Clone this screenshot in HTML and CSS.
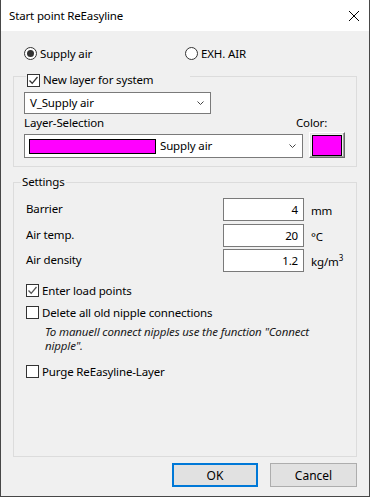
FILE: index.html
```html
<!DOCTYPE html>
<html lang="en">
<head>
    <meta charset="UTF-8">
    <title>Start point ReEasyline</title>
    <link rel="stylesheet" href="styles.css">
</head>
<body>
    <div class="dialog">
        <div class="titlebar">
            <span class="title">Start point ReEasyline</span>
            <svg class="close" width="10" height="10" viewBox="0 0 10 10">
                <path d="M0 0 L10 10 M10 0 L0 10" stroke="#000" stroke-width="1"/>
            </svg>
        </div>

        <div class="body">
            <div class="radio-row">
                <label class="radio first"><span class="radio-dot checked"></span>Supply air</label>
                <label class="radio"><span class="radio-dot"></span>EXH. AIR</label>
            </div>

            <div class="group layer-group">
                <div class="legend legend-check">
                    <span class="check checked"><svg width="11" height="11" viewBox="0 0 11 11"><path d="M1.5 5.5 L4.2 8.3 L9.5 2" fill="none" stroke="#333" stroke-width="1.3"/></svg></span>
                    New layer for system
                </div>
                <div class="combo combo-layer">
                    <span class="combo-text">V_Supply air</span>
                    <svg class="chevron" width="7" height="4" viewBox="0 0 7 4"><path d="M0.5 0.5 L3.5 3.5 L6.5 0.5" fill="none" stroke="#444"/></svg>
                </div>
                <div class="label-row">
                    <span>Layer-Selection</span>
                    <span class="color-label">Color:</span>
                </div>
                <div class="select-row">
                    <div class="combo combo-select">
                        <span class="swatch"></span>
                        <span class="combo-text">Supply air</span>
                        <svg class="chevron" width="7" height="4" viewBox="0 0 7 4"><path d="M0.5 0.5 L3.5 3.5 L6.5 0.5" fill="none" stroke="#444"/></svg>
                    </div>
                    <div class="color-button"><span class="color-fill"></span></div>
                </div>
            </div>

            <div class="group settings-group">
                <div class="legend legend-text">Settings</div>
                <div class="field-row">
                    <span class="field-label">Barrier</span>
                    <span class="field-input">4</span>
                    <span class="field-unit">mm</span>
                </div>
                <div class="field-row row-2">
                    <span class="field-label">Air temp.</span>
                    <span class="field-input">20</span>
                    <span class="field-unit">°C</span>
                </div>
                <div class="field-row row-3">
                    <span class="field-label">Air density</span>
                    <span class="field-input">1.2</span>
                    <span class="field-unit">kg/m<sup>3</sup></span>
                </div>

                <div class="check-row load-row">
                    <span class="check"><svg width="11" height="11" viewBox="0 0 11 11"><path d="M1.5 5.5 L4.2 8.3 L9.5 2" fill="none" stroke="#555" stroke-width="1.3"/></svg></span>
                    Enter load points
                </div>
                <div class="check-row delete-row">
                    <span class="check"></span>
                    Delete all old nipple connections
                </div>
                <p class="note">To manuell connect nipples use the function "Connect<br>nipple".</p>
                <div class="check-row purge-row">
                    <span class="check"></span>
                    Purge ReEasyline-Layer
                </div>
            </div>

            <div class="button-row">
                <button class="btn btn-ok">OK</button>
                <button class="btn">Cancel</button>
            </div>
        </div>
    </div>
</body>
</html>
```

FILE: styles.css
```css
* {
    box-sizing: border-box;
}
body {
    margin: 0;
    font-family: "Noto Sans", "Open Sans", sans-serif;
    font-size: 11.5px;
    letter-spacing: -0.15px;
    line-height: 16px;
    color: #000;
    background: #f0f0f0;
}
.dialog {
    width: 370px;
    height: 497px;
    display: flex;
    flex-direction: column;
    background: #f0f0f0;
    border: 1px solid #474747;
    border-top: none;
}
.titlebar {
    height: 31px;
    flex: none;
    display: flex;
    align-items: center;
    padding-left: 8px;
    background: #fff;
}
.close {
    margin-left: auto;
    margin-right: 10px;
}
.body {
    flex: 1;
    display: flex;
    flex-direction: column;
    padding: 0 12px 9px 12px;
}

/* radio buttons */
.radio-row {
    display: flex;
    align-items: center;
    height: 17px;
    margin-top: 14px;
    padding-left: 11px;
}
.radio {
    display: flex;
    align-items: center;
    gap: 3px;
}
.radio.first {
    width: 161px;
}
.radio-dot {
    width: 13px;
    height: 13px;
    border: 1px solid #333;
    border-radius: 50%;
    background: #fff;
    display: flex;
    align-items: center;
    justify-content: center;
}
.radio-dot.checked:after {
    content: "";
    width: 7px;
    height: 7px;
    border-radius: 50%;
    background: #333;
}

/* group boxes */
.group {
    position: relative;
    border: 1px solid #dcdcdc;
}
.layer-group {
    margin-top: 14px;
    padding: 15px 11px 8px 10px;
}
.settings-group {
    flex: 1;
    margin-top: 15px;
    padding: 15px 12px 0 12px;
}
.legend {
    position: absolute;
    display: flex;
    align-items: center;
    background: #f0f0f0;
    height: 16px;
}
.legend-check {
    top: -5px;
    left: 12px;
    width: 164px;
    padding-left: 1px;
    gap: 3px;
}
.legend-text {
    top: -9px;
    left: 7px;
    padding: 0 1px;
}

.check {
    width: 13px;
    height: 13px;
    flex: none;
    border: 1px solid #333;
    background: #fff;
    display: flex;
    align-items: center;
    justify-content: center;
}

/* combos */
.combo {
    display: flex;
    align-items: center;
    background: #fff;
    border: 1px solid #7a7a7a;
}
.combo-layer {
    width: 187px;
    height: 22px;
    padding-left: 5px;
}
.chevron {
    margin-left: auto;
    margin-right: 6px;
}
.label-row {
    display: flex;
    height: 16px;
    margin-top: 1px;
}
.color-label {
    margin-left: auto;
    width: 49px;
}
.select-row {
    display: flex;
    align-items: flex-end;
    gap: 6px;
    height: 26px;
    margin-top: 1px;
}
.combo-select {
    width: 279px;
    height: 24px;
    padding-left: 4px;
}
.swatch {
    width: 127px;
    height: 15px;
    background: #ff00ff;
    border: 1px solid #000;
    margin-right: 4px;
}
.color-button {
    width: 36px;
    height: 26px;
    padding: 2px;
    background: #f0f0f0;
    border: 1px solid;
    border-color: #fff #696969 #696969 #fff;
    box-shadow: inset -1px -1px 0 #a0a0a0, inset 1px 1px 0 #e3e3e3;
}
.color-fill {
    display: block;
    width: 30px;
    height: 21px;
    background: #ff00ff;
    border: 1px solid #000;
}

/* settings */
.field-row {
    display: flex;
    align-items: center;
    height: 23px;
}
.row-2 {
    margin-top: 3px;
}
.row-3 {
    margin-top: 2px;
}
.field-label {
    width: 197px;
    padding-bottom: 2px;
}
.field-input {
    width: 81px;
    height: 23px;
    line-height: 21px;
    background: #fff;
    border: 1px solid #7a7a7a;
    text-align: right;
    padding-right: 5px;
}
.field-unit {
    margin-left: 7px;
    padding-top: 2px;
}
.field-unit sup {
    font-size: 8px;
    line-height: 0;
    vertical-align: 5px;
}

.check-row {
    display: flex;
    align-items: center;
    gap: 3px;
    height: 15px;
}
.load-row {
    margin-top: 11px;
}
.delete-row {
    margin-top: 7px;
}
.note {
    margin: 5px 0 0 19px;
    font-style: italic;
    line-height: 14px;
    color: #1a1a1a;
}
.purge-row {
    margin-top: 11px;
}

/* buttons */
.button-row {
    display: flex;
    justify-content: flex-end;
    gap: 12px;
    margin-top: 6px;
}
.btn {
    width: 87px;
    height: 24px;
    font-family: inherit;
    font-size: 12px;
    color: #000;
    background: #e1e1e1;
    border: 1px solid #adadad;
    padding: 0;
}
.btn-ok {
    width: 86px;
    border: 2px solid #0078d7;
}
```
